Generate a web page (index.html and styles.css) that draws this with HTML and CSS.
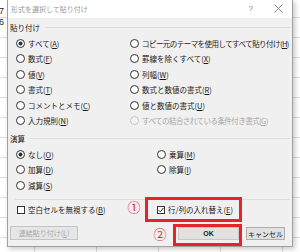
FILE: index.html
```html
<!DOCTYPE html>
<html lang="ja">
<head>
<meta charset="utf-8">
<link rel="stylesheet" href="styles.css">
</head>
<body>
<div class="screen">
  <div class="rowhdr"><span>7</span><span>6</span></div>
  <div class="dialog">
    <div class="titlebar">
      <span class="title">形式を選択して貼り付け</span>
      <span class="help">?</span>
      <svg class="close" width="9" height="9" viewBox="0 0 9 9"><path d="M0.5 0.5 L8.5 8.5 M8.5 0.5 L0.5 8.5" stroke="#808080" stroke-width="1" fill="none"/></svg>
    </div>
    <div class="body">
      <div class="group-label"><span>貼り付け</span><i class="rule"></i></div>
      <div class="grid paste">
        <div class="opt"><span class="radio on"></span>すべて(<u>A</u>)</div>
        <div class="opt tight"><span class="radio"></span>コピー元のテーマを使用してすべて貼り付け(<u>H</u>)</div>
        <div class="opt"><span class="radio"></span>数式(<u>F</u>)</div>
        <div class="opt"><span class="radio"></span>罫線を除くすべて(<u>X</u>)</div>
        <div class="opt"><span class="radio"></span>値(<u>V</u>)</div>
        <div class="opt"><span class="radio"></span>列幅(<u>W</u>)</div>
        <div class="opt"><span class="radio"></span>書式(<u>T</u>)</div>
        <div class="opt"><span class="radio"></span>数式と数値の書式(<u>R</u>)</div>
        <div class="opt"><span class="radio"></span>コメントとメモ(<u>C</u>)</div>
        <div class="opt"><span class="radio"></span>値と数値の書式(<u>U</u>)</div>
        <div class="opt"><span class="radio"></span>入力規則(<u>N</u>)</div>
        <div class="opt disabled tight"><span class="radio"></span>すべての結合されている条件付き書式(<u>G</u>)</div>
      </div>
      <div class="group-label"><span>演算</span><i class="rule"></i></div>
      <div class="grid ops">
        <div class="opt"><span class="radio on"></span>なし(<u>O</u>)</div>
        <div class="opt"><span class="radio"></span>乗算(<u>M</u>)</div>
        <div class="opt"><span class="radio"></span>加算(<u>D</u>)</div>
        <div class="opt"><span class="radio"></span>除算(<u>I</u>)</div>
        <div class="opt"><span class="radio"></span>減算(<u>S</u>)</div>
      </div>
      <div class="sep"></div>
      <div class="checks">
        <div class="opt skip"><span class="box"></span>空白セルを無視する(<u>B</u>)</div>
        <span class="num n1">①</span>
        <div class="redbox rb1">
          <div class="opt"><span class="box on"><svg width="6" height="6" viewBox="0 0 6 6"><path d="M0.6 3.1 L2.3 4.8 L5.4 1" stroke="#222" stroke-width="1" fill="none"/></svg></span>行/列の入れ替え(<u>E</u>)</div>
        </div>
      </div>
      <div class="buttons">
        <div class="btn link">連結貼り付け(<u>L</u>)</div>
        <span class="num n2">②</span>
        <div class="redbox rb2"><div class="btn ok">OK</div></div>
        <div class="btn cancel">キャンセル</div>
      </div>
    </div>
  </div>
</div>
</body>
</html>
```
FILE: styles.css
```css
* { box-sizing: border-box; }
html, body { margin: 0; padding: 0; }
body {
  font-family: "Noto Sans CJK JP", "Noto Sans", sans-serif;
  color: #1a1a1a;
}
.screen {
  width: 300px;
  height: 252px;
  overflow: hidden;
  display: flex;
  align-items: flex-start;
  background-color: #fff;
  background-image:
    repeating-linear-gradient(to bottom, transparent 0 17px, #dcdcdc 17px 18px, transparent 18px 20px),
    repeating-linear-gradient(to right, transparent 0 34px, #dcdcdc 34px 35px, transparent 35px 62px);
}
.rowhdr {
  width: 7px;
  flex: 0 0 7px;
  display: flex;
  flex-direction: column;
  font-family: "Liberation Sans", sans-serif;
  font-size: 9px;
  line-height: 11px;
  padding-top: 6px;
  color: #222;
  overflow: hidden;
}
.rowhdr span { margin-left: -1px; }
.dialog {
  width: 286px;
  height: 247px;
  flex: 0 0 286px;
  border: 1px solid #a0a0a0;
  border-top: 0;
  background: #f0f0f0;
  box-shadow: 2px 2px 5px rgba(0,0,0,0.22);
  display: flex;
  flex-direction: column;
}
.titlebar {
  height: 21px;
  background: #fff;
  display: flex;
  align-items: center;
  padding-left: 3px;
}
.title {
  font-size: 7px;
  color: #9a9a9a;
  flex: 1;
}
.help {
  font-family: "Liberation Sans", sans-serif;
  font-size: 8px;
  color: #808080;
  margin-right: 21px;
}
.close { margin-right: 9px; }
.body {
  padding: 0 2px;
  font-size: 7.5px;
  display: flex;
  flex-direction: column;
}
.group-label {
  height: 12px;
  margin-top: 4px;
  display: flex;
  align-items: center;
  gap: 5px;
  font-size: 7.5px;
}
.group-label .rule {
  flex: 1;
  height: 1px;
  background: #dcdcdc;
}
.grid {
  display: grid;
  grid-auto-rows: 15.5px;
  margin-left: 6px;
  margin-top: 2px;
}
.paste { grid-template-columns: 114px 1fr; }
.ops { grid-template-columns: 141px 1fr; margin-top: 2px; }
.opt {
  display: flex;
  align-items: center;
  white-space: nowrap;
}
.tight { letter-spacing: -0.55px; }
.opt u { text-underline-offset: 1px; text-decoration-thickness: 0.6px; }
.radio {
  width: 9px;
  height: 9px;
  border: 1px solid #333;
  border-radius: 50%;
  background: #fff;
  margin-right: 3px;
  flex: 0 0 9px;
}
.radio.on { background: radial-gradient(circle, #333 0 1.8px, #fff 2.3px); }
.disabled { color: #a6a6a6; }
.disabled .radio { border-color: #c4c4c4; background: #f4f4f4; }
.sep {
  height: 1px;
  background: #dcdcdc;
  margin-top: 6px;
  margin-left: 5px;
}
.checks {
  display: flex;
  align-items: center;
  height: 25px;
  margin-top: -3px;
}
.box {
  width: 8px;
  height: 8px;
  flex: 0 0 8px;
  border: 1px solid #333;
  background: #fff;
  margin-right: 3px;
  display: flex;
  align-items: center;
  justify-content: center;
}
.skip { width: 110px; margin-left: 7px; }
.num {
  color: #e5232b;
  font-size: 13px;
  line-height: 14px;
  width: 14px;
  flex: 0 0 14px;
  text-align: center;
}
.n1 { margin-top: -6px; }
.redbox { border: 3px solid #e5232b; }
.rb1 {
  width: 97px;
  height: 25px;
  margin-left: 4px;
  display: flex;
  align-items: center;
  padding-left: 9px;
}
.buttons {
  display: flex;
  align-items: flex-start;
  margin-top: 2px;
}
.btn {
  height: 13px;
  font-size: 7px;
  display: flex;
  align-items: center;
  justify-content: center;
  background: #e1e1e1;
  border: 1px solid #adadad;
  margin-top: 3px;
  white-space: nowrap;
}
.link {
  width: 68px;
  height: 14px;
  margin-top: 2px;
  color: #a6a6a6;
  background: #e6e6e6;
  border-color: #c4c4c4;
}
.n2 { margin-left: 75px; margin-top: 3px; }
.rb2 {
  width: 69px;
  height: 22px;
  margin-left: 6px;
  padding-left: 2px;
}
.ok {
  width: 61px;
  margin-top: 0;
  font-family: "Liberation Sans", sans-serif;
  font-weight: bold;
  font-size: 7px;
  border-color: #c8c8c8;
}
.cancel { width: 39px; margin-left: 4px; }
```
